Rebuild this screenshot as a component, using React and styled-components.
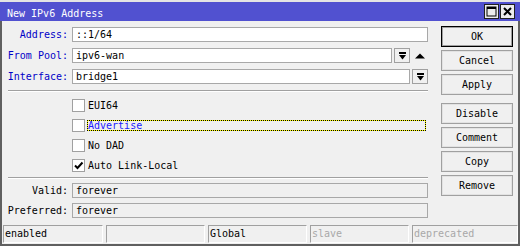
import React from "react";
import styled, { createGlobalStyle } from "styled-components";

const GlobalStyle = createGlobalStyle`
  html, body {
    margin: 0;
    padding: 0;
    background: #f0f0f0;
  }
  body {
    font-family: "DejaVu Sans Mono", "Liberation Mono", monospace;
    font-size: 10px;
    color: #000;
  }
`;

const checks = [
  { label: "EUI64", checked: false },
  { label: "Advertise", checked: false, focus: true },
  { label: "No DAD", checked: false },
  { label: "Auto Link-Local", checked: true },
];

const buttons = [
  { label: "OK", primary: true },
  { label: "Cancel" },
  { label: "Apply" },
  { label: "Disable", spaced: true },
  { label: "Comment" },
  { label: "Copy" },
  { label: "Remove" },
];

const status = [
  { text: "enabled" },
  { text: "" },
  { text: "Global" },
  { text: "slave", dim: true },
  { text: "deprecated", dim: true },
];

function DropIcon() {
  return (
    <svg width="7" height="8" viewBox="0 0 7 8">
      <rect x="0" y="0" width="7" height="2" fill="#000" />
      <polygon points="0,3 7,3 3.5,7.5" fill="#000" />
    </svg>
  );
}

export default function App() {
  return (
    <Window>
      <GlobalStyle />
      <TitleBar>
        <TitleText>New IPv6 Address</TitleText>
        <TitleButtons>
          <TitleButton>
            <svg width="11" height="11" viewBox="0 0 11 11">
              <rect x="1" y="1" width="9" height="9" fill="none" stroke="#000" strokeWidth="1" />
              <rect x="1" y="1" width="9" height="2" fill="#000" />
            </svg>
          </TitleButton>
          <TitleButton>
            <svg width="11" height="11" viewBox="0 0 11 11">
              <path d="M2 2 L9 9 M9 2 L2 9" stroke="#000" strokeWidth="2" />
            </svg>
          </TitleButton>
        </TitleButtons>
      </TitleBar>

      <Frame>
        <Body>
          <Form>
            <Row>
              <Label $color="#0000c8">Address:</Label>
              <Input>::1/64</Input>
            </Row>
            <Row>
              <Label $color="#0000c8">From Pool:</Label>
              <Field>
                <Input>ipv6-wan</Input>
                <DropButton><DropIcon /></DropButton>
                <ArrowSlot>
                  <svg width="10" height="6" viewBox="0 0 10 6">
                    <polygon points="0,5.5 10,5.5 5,0.5" fill="#000" />
                  </svg>
                </ArrowSlot>
              </Field>
            </Row>
            <Row $last>
              <Label $color="#0000c8">Interface:</Label>
              <Field>
                <Input>bridge1</Input>
                <DropButton><DropIcon /></DropButton>
              </Field>
            </Row>

            <Separator $before={6} $after={3} />

            {checks.map((c) => (
              <CheckRow key={c.label}>
                <span />
                <CheckItem>
                  <Box>
                    {c.checked && (
                      <svg width="11" height="11" viewBox="0 0 11 11">
                        <path d="M2 5.5 L4.5 8 L9.5 2.5" fill="none" stroke="#000" strokeWidth="2" />
                      </svg>
                    )}
                  </Box>
                  <CheckLabel $focus={c.focus}>{c.label}</CheckLabel>
                </CheckItem>
              </CheckRow>
            ))}

            <Separator $before={2} $after={4} />

            <Row $gap={5}>
              <Label>Valid:</Label>
              <Input $readOnly>forever</Input>
            </Row>
            <Row $last>
              <Label>Preferred:</Label>
              <Input $readOnly>forever</Input>
            </Row>
          </Form>

          <ButtonColumn>
            {buttons.map((b) => (
              <Button key={b.label} $primary={b.primary} $spaced={b.spaced}>
                {b.label}
              </Button>
            ))}
          </ButtonColumn>
        </Body>

        <StatusBar>
          {status.map((s, i) => (
            <StatusCell key={i} $dim={s.dim}>{s.text}</StatusCell>
          ))}
        </StatusBar>
      </Frame>
    </Window>
  );
}

const Window = styled.div`
  width: 520px;
  height: 246px;
  display: flex;
  flex-direction: column;
  background: #f0f0f0;
`;

const TitleBar = styled.div`
  box-sizing: border-box;
  height: 21px;
  border-top: 2px solid #e4e4e4;
  background: #5151d0;
  display: flex;
  align-items: center;
  padding: 0 5px 0 7px;
`;

const TitleText = styled.span`
  color: #fff;
  padding-top: 4px;
  line-height: 12px;
  white-space: nowrap;
`;

const TitleButtons = styled.div`
  margin-left: auto;
  display: flex;
  gap: 1px;
`;

const TitleButton = styled.div`
  box-sizing: border-box;
  width: 15px;
  height: 15px;
  border: 1px solid #202020;
  background: #ececec;
  display: flex;
  align-items: center;
  justify-content: center;
`;

const Frame = styled.div`
  flex: 1;
  display: flex;
  flex-direction: column;
  border: 2px solid #606060;
  border-top: none;
`;

const Body = styled.div`
  height: 203px;
  display: flex;
`;

const Form = styled.div`
  width: 426px;
  padding-top: 6px;
  display: flex;
  flex-direction: column;
`;

const Row = styled.div`
  display: grid;
  grid-template-columns: 66px 1fr;
  column-gap: 4px;
  align-items: center;
  height: 15px;
  margin-bottom: ${(p) => (p.$last ? 0 : p.$gap ?? 6)}px;
`;

const Label = styled.div`
  text-align: right;
  white-space: nowrap;
  color: ${(p) => p.$color || "#000"};
`;

const Field = styled.div`
  display: flex;
  gap: 2px;
  height: 15px;
`;

const Input = styled.div`
  flex: 1;
  box-sizing: border-box;
  height: 15px;
  line-height: 13px;
  padding-left: 3px;
  border: 1px solid #a8a8a8;
  background: ${(p) => (p.$readOnly ? "#f0f0f0" : "#fff")};
  white-space: nowrap;
`;

const DropButton = styled.div`
  box-sizing: border-box;
  width: 16px;
  height: 15px;
  border: 1px solid #a0a0a0;
  background: #f0f0f0;
  display: flex;
  align-items: center;
  justify-content: center;
`;

const ArrowSlot = styled.div`
  width: 16px;
  display: flex;
  align-items: center;
  justify-content: center;
`;

const Separator = styled.div`
  margin: ${(p) => p.$before}px 0 ${(p) => p.$after}px 6px;
  border-top: 1px solid #a0a0a0;
  border-bottom: 1px solid #fff;
`;

const CheckRow = styled.div`
  display: grid;
  grid-template-columns: 66px 1fr;
  column-gap: 4px;
  height: 20px;
  align-items: center;
`;

const CheckItem = styled.div`
  display: flex;
  align-items: center;
  gap: 2px;
`;

const Box = styled.div`
  box-sizing: border-box;
  width: 13px;
  height: 13px;
  border: 1px solid #a0a0a0;
  background: #fff;
  display: flex;
  align-items: center;
  justify-content: center;
`;

const CheckLabel = styled.div`
  flex: 1;
  margin-right: 2px;
  height: 11px;
  box-sizing: border-box;
  line-height: 9px;
  white-space: nowrap;
  color: ${(p) => (p.$focus ? "#2020ff" : "#000")};
  border: 1px dotted ${(p) => (p.$focus ? "#000" : "transparent")};
  background: ${(p) =>
    p.$focus
      ? "linear-gradient(#f0f0f0, #f0f0f0) padding-box, #ffff00 border-box"
      : "transparent"};
`;

const ButtonColumn = styled.div`
  width: 72px;
  margin-left: 13px;
  padding-top: 5px;
  display: flex;
  flex-direction: column;
  gap: 3px;
`;

const Button = styled.div`
  box-sizing: border-box;
  height: 21px;
  margin-top: ${(p) => (p.$spaced ? 5 : 0)}px;
  display: flex;
  align-items: center;
  justify-content: center;
  background: #f0f0f0;
  border: 1px solid ${(p) => (p.$primary ? "#000" : "#a0a0a0")};
  box-shadow: inset 0 0 0 1px ${(p) => (p.$primary ? "#a0a0a0" : "#e2e2e2")};
  white-space: nowrap;
`;

const StatusBar = styled.div`
  height: 20px;
  box-sizing: border-box;
  padding: 1px 0 1px 1px;
  display: grid;
  grid-template-columns: 100px 99px 99px 99px 1fr;
  column-gap: 3px;
`;

const StatusCell = styled.div`
  box-sizing: border-box;
  border: 1px solid #a0a0a0;
  border-right-color: #fff;
  border-bottom-color: #fff;
  padding-left: 1px;
  line-height: 16px;
  white-space: nowrap;
  color: ${(p) => (p.$dim ? "#a8a8a8" : "#000")};
`;
